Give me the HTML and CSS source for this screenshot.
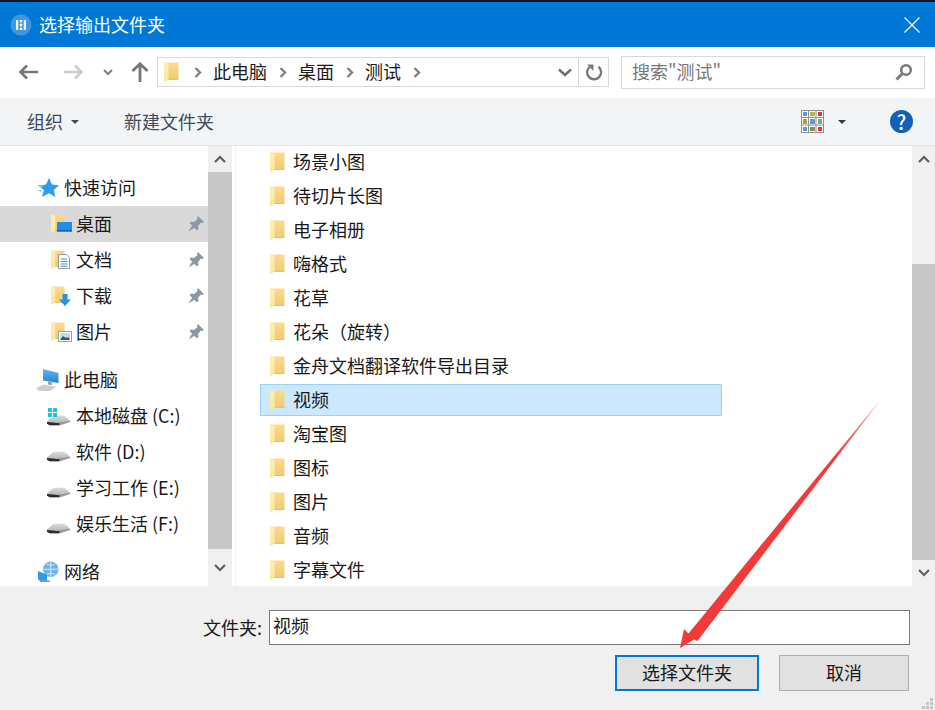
FILE: index.html
```html
<!DOCTYPE html>
<html lang="zh-CN">

<head>
    <meta charset="UTF-8">
    <title>选择输出文件夹</title>
    <link rel="stylesheet" href="styles.css">
</head>

<body>
    <!-- shared icons -->
    <svg class="defs" width="0" height="0">
        <defs>
            <linearGradient id="folderBack" x1="0" y1="0" x2="0" y2="1">
                <stop offset="0" stop-color="#f9dc8c" />
                <stop offset="1" stop-color="#f0cb74" />
            </linearGradient>
            <linearGradient id="folderFront" x1="0" y1="0" x2="0" y2="1">
                <stop offset="0" stop-color="#ffefb6" />
                <stop offset="1" stop-color="#fde69c" />
            </linearGradient>
            <linearGradient id="driveTop" x1="0" y1="0" x2="0" y2="1">
                <stop offset="0" stop-color="#dcdcdc" />
                <stop offset="1" stop-color="#b8b8b8" />
            </linearGradient>
            <linearGradient id="pcScreen" x1="0" y1="0" x2="0" y2="1">
                <stop offset="0" stop-color="#5fbdf0" />
                <stop offset="1" stop-color="#1c86d0" />
            </linearGradient>
            <symbol id="folder" viewBox="0 0 15 20">
                <path d="M0 0.500h14.500v16.500H0z" fill="url(#folderBack)" />
                <path d="M0 0.500l4.500 1v16.500L0 20z" fill="url(#folderFront)" />
                <path d="M4.500 17h10v1h-10z" fill="#e6c06a" />
            </symbol>
            <symbol id="drive" viewBox="0 0 24 12">
                <path d="M0 7.500 L7 1.500 H18 L24 6.500 L10 8.500 Z" fill="url(#driveTop)" />
                <path d="M0 7.500 L10 8.500 L24 6.500 V8 L14 11.500 H3 L0 10 Z" fill="#9a9a9a" />
                <path d="M0 8 L13 9.500 V11.500 H3 L0 10 Z" fill="#2e2a2a" />
            </symbol>
            <symbol id="pin" viewBox="0 0 16 16">
                <path d="M10 0 L16 6 L14.500 7 L13 6.500 L10 10 L10.500 13 L9 14.500 L1.500 7 L3 5.500 L6 6 L9.500 3 L9 1.500 Z"
                    fill="#8e98a3" />
                <path d="M4.500 9 L.5 15.500 L7 11.500 Z" fill="#8e98a3" />
            </symbol>
        </defs>
    </svg>

    <div class="dialog">
        <div class="top-strip"></div>

        <div class="titlebar">
            <svg class="title-icon" width="22" height="22" viewBox="0 0 22 22">
                <circle cx="11" cy="11" r="10.500" fill="#3f97e0" />
                <rect x="6" y="6" width="10" height="10" fill="#eef4fa" />
                <path d="M9 6v10M13 6v10M9 9h4M9 13h4" stroke="#2e7cc4" stroke-width="1.200" />
            </svg>
            <span class="title-text">选择输出文件夹</span>
            <svg class="close-icon" width="16" height="16" viewBox="0 0 16 16">
                <path d="M.5.500l15 15M15.500.500l-15 15" stroke="#fff" stroke-width="1.100" />
            </svg>
        </div>

        <div class="addressbar">
            <div class="nav-buttons">
                <svg class="nav-back" width="20" height="16" viewBox="0 0 20 16">
                    <path d="M9 1.500L2.500 8 9 14.500M3 8h17" fill="none" stroke="#777" stroke-width="2.600" />
                </svg>
                <svg class="nav-forward" width="20" height="16" viewBox="0 0 20 16">
                    <path d="M11 1.500L17.500 8 11 14.500M17 8H0" fill="none" stroke="#ccc" stroke-width="2.600" />
                </svg>
                <svg class="nav-recent" width="10" height="7" viewBox="0 0 10 7">
                    <path d="M1 1l4 4 4-4" fill="none" stroke="#808080" stroke-width="2" />
                </svg>
                <svg class="nav-up" width="18" height="20" viewBox="0 0 18 20">
                    <path d="M1.500 9L9 1.800 16.500 9M9 2.500V20" fill="none" stroke="#777" stroke-width="2.800" />
                </svg>
            </div>

            <div class="path-box">
                <svg class="path-folder" width="15" height="20">
                    <use href="#folder" />
                </svg>
                <svg class="crumb-arrow" width="8" height="11" viewBox="0 0 8 11">
                    <path d="M1.500 1L6 5.500 1.500 10" fill="none" stroke="#808080" stroke-width="2.400" />
                </svg>
                <span class="crumb">此电脑</span>
                <svg class="crumb-arrow" width="8" height="11" viewBox="0 0 8 11">
                    <path d="M1.500 1L6 5.500 1.500 10" fill="none" stroke="#808080" stroke-width="2.400" />
                </svg>
                <span class="crumb">桌面</span>
                <svg class="crumb-arrow" width="8" height="11" viewBox="0 0 8 11">
                    <path d="M1.500 1L6 5.500 1.500 10" fill="none" stroke="#808080" stroke-width="2.400" />
                </svg>
                <span class="crumb">测试</span>
                <svg class="crumb-arrow" width="8" height="11" viewBox="0 0 8 11">
                    <path d="M1.500 1L6 5.500 1.500 10" fill="none" stroke="#808080" stroke-width="2.400" />
                </svg>

                <svg class="path-drop" width="14" height="9" viewBox="0 0 14 9">
                    <path d="M1 1.500l6 5.500 6-5.500" fill="none" stroke="#6e6e6e" stroke-width="2.400" />
                </svg>
                <div class="path-refresh">
                    <svg width="18" height="18" viewBox="0 0 18 18">
                        <path d="M5 3.600A7 7 0 1 0 13.500 3.800" fill="none" stroke="#7a7a7a" stroke-width="2.400" />
                        <path d="M2 1.500h6.500V8z" fill="#7a7a7a" />
                    </svg>
                </div>
            </div>

            <div class="search-box">
                <span class="search-text">搜索"测试"</span>
                <svg class="search-icon" width="18" height="18" viewBox="0 0 18 18">
                    <circle cx="11" cy="7" r="4.800" fill="none" stroke="#7a7a7a" stroke-width="2.600" />
                    <path d="M7.500 10.500L1.500 16.500" stroke="#7a7a7a" stroke-width="3" />
                </svg>
            </div>
        </div>

        <div class="toolbar">
            <span class="tool-btn">组织</span>
            <span class="caret"></span>
            <span class="tool-btn new-folder">新建文件夹</span>

            <svg class="view-icon" width="23" height="23" viewBox="0 0 23 23">
                <rect x=".5" y=".5" width="22" height="22" fill="#fff" stroke="#909090" />
                <path d="M7.500 0v23M15 0v23M0 7.500h23M0 15h23" stroke="#909090" />
                <rect x="2" y="2" width="4" height="4" fill="#5b9bd5" />
                <rect x="9" y="2" width="5" height="4" fill="#b5b45a" />
                <rect x="17" y="2" width="4" height="4" fill="#d13c3c" />
                <rect x="2" y="9" width="4" height="5" fill="#a9a13a" />
                <rect x="9" y="9" width="5" height="5" fill="#5b9bd5" />
                <rect x="17" y="9" width="4" height="5" fill="#6fb36f" />
                <rect x="2" y="17" width="4" height="4" fill="#5b9bd5" />
                <rect x="9" y="17" width="5" height="4" fill="#8a8f5a" />
                <rect x="17" y="17" width="4" height="4" fill="#d13c3c" />
            </svg>
            <span class="caret view-caret"></span>
            <div class="help-icon">?</div>
        </div>

        <div class="panes">
            <div class="side-nav">
                <div class="nav-head">
                    <svg class="nav-icon" width="22" height="20" viewBox="0 0 22 20">
                        <path d="M12 0l3 6.500 7 .8-5.200 4.600L18.500 19 12 15.300 5 19l2-7L1 7.500l8-1z" fill="#2f9cf0" />
                        <path d="M1 7.500h6L4 10zM0 12h5l-1 2z" fill="#8ccbf7" />
                    </svg>
                    <span>快速访问</span>
                </div>
                <div class="nav-row active">
                    <div class="nav-icon">
                        <svg class="mini-folder" width="14" height="19"><use href="#folder" /></svg>
                        <svg class="badge" width="15" height="10" viewBox="0 0 15 10">
                            <rect width="15" height="10" fill="#1e90ea" />
                            <path d="M0 8.500h15" stroke="#0d4f86" stroke-dasharray="2 1" />
                        </svg>
                    </div>
                    <span>桌面</span>
                    <svg class="pin" width="16" height="16"><use href="#pin" /></svg>
                </div>
                <div class="nav-row">
                    <div class="nav-icon">
                        <svg class="mini-folder" width="14" height="19"><use href="#folder" /></svg>
                        <svg class="badge badge-doc" width="12" height="15" viewBox="0 0 12 15">
                            <path d="M.5.500h8l3 3v11H.5z" fill="#fff" stroke="#9a9a9a" />
                            <path d="M3 5h6M2.500 7.500h7M2.500 10h7M2.500 12.300h7" stroke="#3f8fc8" />
                        </svg>
                    </div>
                    <span>文档</span>
                    <svg class="pin" width="16" height="16"><use href="#pin" /></svg>
                </div>
                <div class="nav-row">
                    <div class="nav-icon">
                        <svg class="mini-folder" width="14" height="19"><use href="#folder" /></svg>
                        <svg class="badge badge-down" width="12" height="12" viewBox="0 0 12 12">
                            <path d="M3.500 0h5v5.500H12L6 12 0 5.500h3.500z" fill="#2e8fe0" />
                        </svg>
                    </div>
                    <span>下载</span>
                    <svg class="pin" width="16" height="16"><use href="#pin" /></svg>
                </div>
                <div class="nav-row">
                    <div class="nav-icon">
                        <svg class="mini-folder" width="14" height="19"><use href="#folder" /></svg>
                        <svg class="badge badge-pic" width="14" height="11" viewBox="0 0 14 11">
                            <rect x=".5" y=".5" width="13" height="10" fill="#fff" stroke="#a0a0a0" />
                            <rect x="2" y="2" width="10" height="7" fill="#bcdcf0" />
                            <path d="M2 9l3-4 3 2 2-1 2 3z" fill="#3d5566" />
                        </svg>
                    </div>
                    <span>图片</span>
                    <svg class="pin" width="16" height="16"><use href="#pin" /></svg>
                </div>

                <div class="nav-head nav-gap">
                    <svg class="nav-icon pc-icon" width="23" height="22" viewBox="0 0 23 22">
                        <path d="M7 0l15.500 4v10L7 11.500z" fill="url(#pcScreen)" />
                        <path d="M12 12.500l4 .7v3l-4-.7z" fill="#9aa0a5" />
                        <path d="M0 19l8-3.500L20 18l-6 4H3z" fill="#c9cdd1" />
                    </svg>
                    <span>此电脑</span>
                </div>
                <div class="nav-row">
                    <div class="nav-icon">
                        <svg class="mini-drive" width="23" height="12"><use href="#drive" /></svg>
                        <svg class="win-logo" width="9" height="9" viewBox="0 0 9 9">
                            <path d="M0 0h4v4H0zM5 0h4v4H5zM0 5h4v4H0zM5 5h4v4H5z" fill="#19c3e6" />
                        </svg>
                    </div>
                    <span>本地磁盘 (C:)</span>
                </div>
                <div class="nav-row">
                    <div class="nav-icon">
                        <svg class="mini-drive" width="23" height="12"><use href="#drive" /></svg>
                    </div>
                    <span>软件 (D:)</span>
                </div>
                <div class="nav-row">
                    <div class="nav-icon">
                        <svg class="mini-drive" width="23" height="12"><use href="#drive" /></svg>
                    </div>
                    <span>学习工作 (E:)</span>
                </div>
                <div class="nav-row">
                    <div class="nav-icon">
                        <svg class="mini-drive" width="23" height="12"><use href="#drive" /></svg>
                    </div>
                    <span>娱乐生活 (F:)</span>
                </div>

                <div class="nav-head nav-gap">
                    <svg class="nav-icon" width="22" height="22" viewBox="0 0 24 24">
                        <circle cx="15" cy="9" r="8.500" fill="#6fb2e6" />
                        <path d="M15 .500v17M7 9h16M10 3c3 2 7 2 10 0M10 15c3-2 7-2 10 0" stroke="#d8ecfa" fill="none" />
                        <path d="M1 11l10 4v7H4l-3-2z" fill="#2a9be4" />
                        <path d="M3 21h10l2 2H3z" fill="#8d99a3" />
                    </svg>
                    <span>网络</span>
                </div>
            </div>

            <div class="scrollbar side-scroll">
                <div class="scroll-btn">
                    <svg width="12" height="8" viewBox="0 0 12 8">
                        <path d="M1 7l5-5 5 5" fill="none" stroke="#606060" stroke-width="2.200" />
                    </svg>
                </div>
                <div class="scroll-thumb"></div>
                <div class="scroll-btn">
                    <svg width="12" height="8" viewBox="0 0 12 8">
                        <path d="M1 1l5 5 5-5" fill="none" stroke="#606060" stroke-width="2.200" />
                    </svg>
                </div>
            </div>

            <div class="file-list">
                <div class="file-row"><svg class="file-icon" width="15" height="20"><use href="#folder" /></svg><span>场景小图</span></div>
                <div class="file-row"><svg class="file-icon" width="15" height="20"><use href="#folder" /></svg><span>待切片长图</span></div>
                <div class="file-row"><svg class="file-icon" width="15" height="20"><use href="#folder" /></svg><span>电子相册</span></div>
                <div class="file-row"><svg class="file-icon" width="15" height="20"><use href="#folder" /></svg><span>嗨格式</span></div>
                <div class="file-row"><svg class="file-icon" width="15" height="20"><use href="#folder" /></svg><span>花草</span></div>
                <div class="file-row"><svg class="file-icon" width="15" height="20"><use href="#folder" /></svg><span>花朵（旋转）</span></div>
                <div class="file-row"><svg class="file-icon" width="15" height="20"><use href="#folder" /></svg><span>金舟文档翻译软件导出目录</span></div>
                <div class="file-row selected"><svg class="file-icon" width="15" height="20"><use href="#folder" /></svg><span>视频</span></div>
                <div class="file-row"><svg class="file-icon" width="15" height="20"><use href="#folder" /></svg><span>淘宝图</span></div>
                <div class="file-row"><svg class="file-icon" width="15" height="20"><use href="#folder" /></svg><span>图标</span></div>
                <div class="file-row"><svg class="file-icon" width="15" height="20"><use href="#folder" /></svg><span>图片</span></div>
                <div class="file-row"><svg class="file-icon" width="15" height="20"><use href="#folder" /></svg><span>音频</span></div>
                <div class="file-row"><svg class="file-icon" width="15" height="20"><use href="#folder" /></svg><span>字幕文件</span></div>
            </div>

            <div class="scrollbar list-scroll">
                <div class="scroll-btn">
                    <svg width="12" height="8" viewBox="0 0 12 8">
                        <path d="M1 7l5-5 5 5" fill="none" stroke="#606060" stroke-width="2.200" />
                    </svg>
                </div>
                <div class="scroll-track"></div>
                <div class="scroll-thumb"></div>
                <div class="scroll-btn">
                    <svg width="12" height="8" viewBox="0 0 12 8">
                        <path d="M1 1l5 5 5-5" fill="none" stroke="#606060" stroke-width="2.200" />
                    </svg>
                </div>
            </div>
        </div>

        <div class="footer">
            <div class="name-row">
                <label class="name-label">文件夹:</label>
                <div class="name-input">视频</div>
            </div>
            <div class="btn-row">
                <div class="btn primary">选择文件夹</div>
                <div class="btn">取消</div>
            </div>
            <svg class="grip" width="12" height="12" viewBox="0 0 12 12">
                <path d="M8 1h3v3H8zM4 5h3v3H4zM8 5h3v3H8zM0 9h3v3H0zM4 9h3v3H4zM8 9h3v3H8z" fill="#c4c4c4" />
            </svg>
        </div>

        <!-- red annotation arrow over the dialog -->
        <svg class="annotation" width="935" height="710" viewBox="0 0 935 710">
            <defs>
                <linearGradient id="arrowFade" gradientUnits="userSpaceOnUse" x1="882" y1="398" x2="835" y2="458">
                    <stop offset="0" stop-color="#f4a6a6" />
                    <stop offset="1" stop-color="#f23a3a" />
                </linearGradient>
            </defs>
            <path d="M882 398 L697.500 641 L694 639.500 L680 648 L684 629 L688.500 633.500 Z" fill="url(#arrowFade)" />
        </svg>
    </div>
</body>

</html>
```

FILE: styles.css
```css
* {
    box-sizing: border-box;
    margin: 0;
    padding: 0;
    font-family: "Noto Sans CJK SC", "Noto Sans", sans-serif;
}

body {
    width: 935px;
    height: 710px;
    overflow: hidden;
    background: #f0f0f0;
}

.defs {
    display: block;
    height: 0;
}

.dialog {
    position: relative;
    display: flex;
    flex-direction: column;
    width: 935px;
    height: 710px;
    color: #1a1a1a;
    font-size: 18px;
}

.top-strip {
    height: 2px;
    background: #0b1a2a;
}

/* title */
.titlebar {
    display: flex;
    align-items: center;
    height: 45px;
    padding-left: 10px;
    background: #0078d7;
    color: #fff;
}

.title-text {
    margin-left: 7px;
    padding-bottom: 2px;
}

.close-icon {
    margin-left: auto;
    margin-right: 15px;
}

/* address row */
.addressbar {
    display: flex;
    align-items: center;
    height: 51px;
    padding-bottom: 1px;
    background: #fff;
}

.nav-buttons {
    display: flex;
    align-items: center;
    width: 157px;
    padding-left: 18px;
}

.nav-forward {
    margin-left: 26px;
}

.nav-recent {
    margin-left: 19px;
}

.nav-up {
    margin-left: 18px;
}

.path-box {
    display: flex;
    align-items: center;
    width: 452px;
    height: 30px;
    padding-left: 6px;
    border: 1px solid #d9d9d9;
}

.path-folder {
    margin-right: 15px;
}

.crumb-arrow {
    margin-right: 11px;
}

.crumb {
    margin-right: 12px;
    padding-bottom: 2px;
    line-height: 26px;
}

.path-drop {
    margin-left: auto;
    margin-right: 6px;
}

.path-refresh {
    display: flex;
    align-items: center;
    justify-content: center;
    width: 30px;
    height: 28px;
    border-left: 1px solid #d9d9d9;
}

.search-box {
    display: flex;
    align-items: center;
    justify-content: space-between;
    width: 304px;
    height: 33px;
    margin-left: 12px;
    padding: 0 11px 0 10px;
    border: 1px solid #d9d9d9;
}

.search-text {
    padding-bottom: 2px;
    color: #777;
}

/* toolbar */
.toolbar {
    display: flex;
    align-items: center;
    height: 48px;
    padding-left: 27px;
    background: #f3f4f6;
    border-bottom: 1px solid #e6e6e6;
    color: #3c4a5c;
}

.tool-btn {
    padding-bottom: 2px;
}

.caret {
    width: 0;
    height: 0;
    margin-left: 8px;
    border-left: 4px solid transparent;
    border-right: 4px solid transparent;
    border-top: 4px solid #3c4a5c;
}

.new-folder {
    margin-left: 45px;
}

.view-icon {
    margin-left: auto;
}

.view-caret {
    margin-left: 14px;
    border-top-color: #2b3a4e;
}

.help-icon {
    width: 23px;
    height: 23px;
    margin: 0 22px 0 44px;
    border-radius: 50%;
    background: #0f62b8;
    color: #fff;
    font-size: 20px;
    font-weight: 500;
    line-height: 23px;
    text-align: center;
}

/* panes */
.panes {
    display: flex;
    height: 440px;
    background: #fff;
}

.side-nav {
    width: 208px;
    height: 440px;
    padding-top: 24px;
    overflow: hidden;
}

.nav-head,
.nav-row {
    display: flex;
    align-items: center;
    height: 36px;
}

.nav-head > span,
.nav-row > span {
    padding-bottom: 2px;
}

.nav-head {
    padding-left: 37px;
}

.nav-head .nav-icon {
    width: 22px;
    margin-right: 5px;
}

.nav-head .pc-icon {
    width: 23px;
    margin-left: -1px;
}

.nav-gap {
    margin-top: 12px;
}

.nav-row {
    padding-left: 47px;
    padding-right: 4px;
}

.nav-row.active {
    background: #d9d9d9;
}

.nav-row .nav-icon {
    position: relative;
    width: 24px;
    height: 22px;
    margin-right: 5px;
    flex-shrink: 0;
}

.mini-folder {
    position: absolute;
    left: 4px;
    top: 1px;
}

.badge {
    position: absolute;
    left: 10px;
    top: 9px;
}

.badge-doc {
    left: 11px;
    top: 5px;
}

.badge-down {
    left: 12px;
    top: 9px;
}

.badge-pic {
    left: 11px;
    top: 10px;
}

.mini-drive {
    position: absolute;
    left: 0;
    top: 9px;
}

.win-logo {
    position: absolute;
    left: 1px;
    top: 3px;
}

.pin {
    margin-left: auto;
}

.scrollbar {
    display: flex;
    flex-direction: column;
    background: #f0f0f0;
}

.side-scroll {
    width: 24px;
}

.list-scroll {
    width: 23px;
}

.scroll-btn {
    display: flex;
    align-items: center;
    justify-content: center;
    height: 26px;
}

.side-scroll .scroll-btn:last-child {
    height: 37px;
}

.scroll-thumb {
    flex: 1;
    background: #c8c8c8;
}

.scroll-track {
    height: 92px;
}

.file-list {
    display: flex;
    flex-direction: column;
    gap: 2px;
    flex: 1;
    margin-left: 3px;
    padding-left: 24px;
    overflow: hidden;
    border-left: 1px solid #f0f0f0;
}

.file-row {
    display: flex;
    align-items: center;
    flex-shrink: 0;
    width: 462px;
    height: 32px;
    padding-left: 9px;
    border: 1px solid transparent;
}

.file-row > span {
    padding-bottom: 2px;
}

.file-row.selected {
    background: #cce8ff;
    border-color: #99d1ff;
}

.file-icon {
    margin-right: 8px;
}

/* footer */
.footer {
    position: relative;
    flex: 1;
    background: #f0f0f0;
}

.name-row {
    display: flex;
    align-items: center;
    height: 35px;
    margin-top: 24px;
    padding-left: 203px;
}

.name-label {
    width: 66px;
    padding-bottom: 2px;
}

.name-input {
    width: 641px;
    height: 35px;
    padding-left: 3px;
    background: #fff;
    border: 1px solid #7a7a7a;
    line-height: 29px;
}

.btn-row {
    display: flex;
    justify-content: flex-end;
    gap: 20px;
    margin-top: 10px;
    padding-right: 26px;
}

.btn {
    width: 130px;
    height: 36px;
    background: #e1e1e1;
    border: 1px solid #adadad;
    line-height: 33px;
    text-align: center;
}

.btn.primary {
    width: 144px;
    border: 2px solid #0078d7;
    line-height: 31px;
}

.grip {
    position: absolute;
    right: 1px;
    bottom: 1px;
}

.annotation {
    position: absolute;
    left: 0;
    top: 0;
    pointer-events: none;
}
```
